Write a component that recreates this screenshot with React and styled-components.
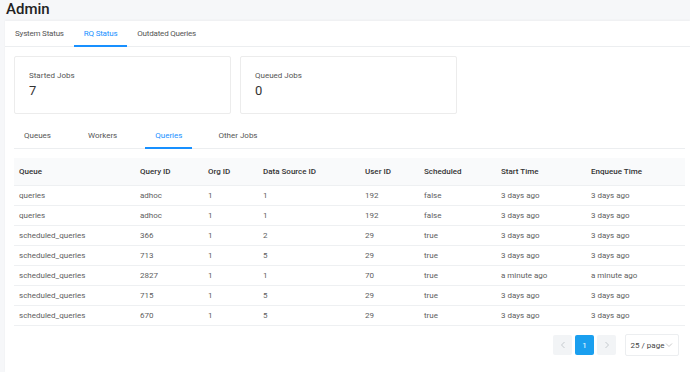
import React from 'react'
import styled, { createGlobalStyle } from 'styled-components'

const GlobalStyle = createGlobalStyle`
  html, body {
    margin: 0;
    padding: 0;
    background: #f6f7f9;
    overflow: hidden;
  }
  body {
    font-family: Roboto, 'Noto Sans', sans-serif;
    color: #595959;
  }
`

const Page = styled.div`
  width: 690px;
  height: 372px;
  display: flex;
  flex-direction: column;
`

const Title = styled.h1`
  margin: 0;
  height: 21px;
  padding-left: 6px;
  font-size: 15px;
  font-weight: 500;
  line-height: 18px;
  color: #222;
`

const Panel = styled.div`
  flex: 1;
  margin-left: 5px;
  background: #fff;
  box-shadow: 0 -1px 2px rgba(0, 0, 0, 0.04);
  display: flex;
  flex-direction: column;
`

const TabBar = styled.div`
  display: flex;
  height: 25px;
  border-bottom: 1px solid #eceef0;
`

const Tab = styled.div`
  display: flex;
  align-items: center;
  padding: 0 10px;
  margin-right: ${({ spacing }) => spacing || 0}px;
  font-size: 8px;
  letter-spacing: ${({ tight }) => (tight ? '-0.2px' : '0')};
  color: ${({ active }) => (active ? '#1890ff' : '#555')};
  border-bottom: 2px solid ${({ active }) => (active ? '#1890ff' : 'transparent')};
  margin-bottom: -1px;
`

const Content = styled.div`
  padding: 9px 5px 0 9px;
  display: flex;
  flex-direction: column;
`

const Cards = styled.div`
  display: flex;
  gap: 9px;
  margin-bottom: 9px;
`

const Card = styled.div`
  width: 217px;
  height: 58px;
  box-sizing: border-box;
  border: 1px solid #ececec;
  border-radius: 2px;
  padding: 13px 14px;
`

const CardLabel = styled.div`
  font-size: 8px;
  line-height: 12px;
  color: #555;
`

const CardValue = styled.div`
  font-size: 13px;
  line-height: 17px;
  color: #333;
`

const Table = styled.table`
  width: 671px;
  border-collapse: collapse;
  table-layout: fixed;
  margin-top: 9px;
`

const HeadCell = styled.th`
  height: 27px;
  padding: 0 0 0 5px;
  text-align: left;
  font-size: 8px;
  font-weight: 500;
  color: #333;
  background: #f9fafb;
  border-bottom: 1px solid #eef0f2;
`

const Cell = styled.td`
  height: 19px;
  padding: 0 0 0 5px;
  font-size: 8px;
  color: #606060;
  border-bottom: 1px solid #eef0f2;
  white-space: nowrap;
`

const Pager = styled.div`
  display: flex;
  justify-content: flex-end;
  align-items: center;
  gap: 3px;
  padding-right: 6px;
  margin-top: 8px;
`

const PageButton = styled.div`
  width: 19px;
  height: 20px;
  display: flex;
  align-items: center;
  justify-content: center;
  font-size: 8px;
  background: ${({ active }) => (active ? '#1a9fef' : '#f2f4f6')};
  color: ${({ active }) => (active ? '#fff' : '#c0c4c8')};
  border-radius: 2px;
`

const SizeSelect = styled.div`
  margin-left: 6px;
  width: 54px;
  height: 22px;
  box-sizing: border-box;
  border: 1px solid #eceef0;
  border-radius: 2px;
  display: flex;
  align-items: center;
  justify-content: center;
  gap: 1px;
  font-size: 8px;
  color: #444;
`

const columns = [
  ['Queue', 121],
  ['Query ID', 68],
  ['Org ID', 55],
  ['Data Source ID', 102],
  ['User ID', 59],
  ['Scheduled', 77],
  ['Start Time', 90],
  ['Enqueue Time', 99],
]

const rows = [
  ['queries', 'adhoc', '1', '1', '192', 'false', '3 days ago', '3 days ago'],
  ['queries', 'adhoc', '1', '1', '192', 'false', '3 days ago', '3 days ago'],
  ['scheduled_queries', '366', '1', '2', '29', 'true', '3 days ago', '3 days ago'],
  ['scheduled_queries', '713', '1', '5', '29', 'true', '3 days ago', '3 days ago'],
  ['scheduled_queries', '2827', '1', '1', '70', 'true', 'a minute ago', 'a minute ago'],
  ['scheduled_queries', '715', '1', '5', '29', 'true', '3 days ago', '3 days ago'],
  ['scheduled_queries', '670', '1', '5', '29', 'true', '3 days ago', '3 days ago'],
]

const Chevron = ({ dir, color }) => (
  <svg width="6" height="8" viewBox="0 0 6 8" fill="none">
    <path
      d={dir === 'left' ? 'M4.5 1L1.5 4l3 3' : 'M1.5 1l3 3-3 3'}
      stroke={color}
      strokeWidth="0.9"
    />
  </svg>
)

export default function App() {
  return (
    <Page>
      <GlobalStyle />
      <Title>Admin</Title>
      <Panel>
        <TabBar>
          <Tab tight>System Status</Tab>
          <Tab tight active>RQ Status</Tab>
          <Tab tight>Outdated Queries</Tab>
        </TabBar>
        <Content>
          <Cards>
            <Card>
              <CardLabel>Started Jobs</CardLabel>
              <CardValue>7</CardValue>
            </Card>
            <Card>
              <CardLabel>Queued Jobs</CardLabel>
              <CardValue>0</CardValue>
            </Card>
          </Cards>
          <TabBar>
            <Tab spacing={17}>Queues</Tab>
            <Tab spacing={18}>Workers</Tab>
            <Tab spacing={16} active>Queries</Tab>
            <Tab>Other Jobs</Tab>
          </TabBar>
          <Table>
            <colgroup>
              {columns.map(([name, w]) => (
                <col key={name} style={{ width: w }} />
              ))}
            </colgroup>
            <thead>
              <tr>
                {columns.map(([name]) => (
                  <HeadCell key={name}>{name}</HeadCell>
                ))}
              </tr>
            </thead>
            <tbody>
              {rows.map((r, i) => (
                <tr key={i}>
                  {r.map((v, j) => (
                    <Cell key={j}>{v}</Cell>
                  ))}
                </tr>
              ))}
            </tbody>
          </Table>
          <Pager>
            <PageButton>
              <Chevron dir="left" color="#c0c4c8" />
            </PageButton>
            <PageButton active>1</PageButton>
            <PageButton>
              <Chevron dir="right" color="#c0c4c8" />
            </PageButton>
            <SizeSelect>
              25 / page
              <svg width="8" height="8" viewBox="0 0 8 8" fill="none">
                <path d="M1 2.5l3 3 3-3" stroke="#bbb" strokeWidth="0.8" />
              </svg>
            </SizeSelect>
          </Pager>
        </Content>
      </Panel>
    </Page>
  )
}
